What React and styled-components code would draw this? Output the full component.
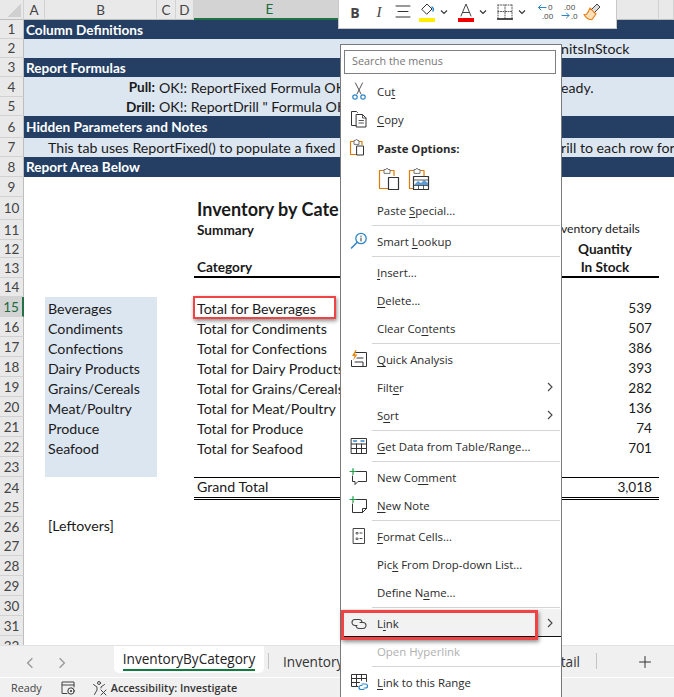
import React from 'react'
import styled, { createGlobalStyle } from 'styled-components'

const Global = createGlobalStyle`
  html, body { margin: 0; padding: 0; width: 674px; height: 697px; overflow: hidden; background: #fff; }
  * { box-sizing: border-box; }
`;

const COLS = '24px 21px 112px 19px 18px 367px 98px 15px';
const HEAD_COLS = '24px 21px 112px 19px 18px 152px 313px 15px';

const Page = styled.div`
  position: relative;
  width: 674px;
  height: 697px;
  overflow: hidden;
  display: flex;
  flex-direction: column;
  font-family: Lato, "Liberation Sans", sans-serif;
  font-size: 14.2px;
  color: #1a1a1a;
`;
const ColHeader = styled.div`
  display: grid;
  grid-template-columns: ${HEAD_COLS};
  height: 20px;
  background: #e9e9e9;
  flex: none;
`;
const ColCell = styled.div`
  display: flex;
  align-items: center;
  justify-content: center;
  font-size: 13.5px;
  color: ${p => (p.$active ? '#1d6b41' : '#444')};
  background: ${p => (p.$active ? '#d3d3d3' : 'transparent')};
  border-right: 1px solid #d2d2d2;
  border-bottom: ${p => (p.$active ? '2px solid #217346' : '1px solid #bdbdbd')};
`;
const Corner = styled.div`
  border-right: 1px solid #d2d2d2;
  border-bottom: 1px solid #bdbdbd;
  background: linear-gradient(135deg, #e9e9e9 50%, #d0d0d0 50%);
  background-size: 14px 14px;
  background-position: right 2px bottom 2px;
  background-repeat: no-repeat;
`;
const Sheet = styled.div`
  flex: 1;
  min-height: 0;
  overflow: hidden;
`;
const Row = styled.div`
  display: grid;
  grid-template-columns: ${COLS};
  height: ${p => p.$h}px;
`;
const RowNum = styled.div`
  display: flex;
  align-items: center;
  justify-content: center;
  font-size: 13.5px;
  padding-top: ${p => (p.$low ? 1 : 0)}px;
  color: ${p => (p.$active ? '#1d6b41' : '#444')};
  background: ${p => (p.$active ? '#d3d3d3' : '#e9e9e9')};
  border-bottom: 1px solid #d2d2d2;
  border-right: ${p => (p.$active ? '2px solid #217346' : '1px solid #bdbdbd')};
`;
const Banner = styled.div`
  grid-column: 2 / -1;
  display: flex;
  align-items: center;
  padding-left: 2px;
  background: #243f63;
  color: #fff;
  font-size: 13.6px;
  font-weight: 700;
  white-space: nowrap;
`;
const Band = styled.div`
  grid-column: 2 / 7;
  display: flex;
  align-items: center;
  background: #dce6f1;
  white-space: nowrap;
  overflow: hidden;
`;
const BandRight = styled.div`
  grid-column: 7 / -1;
  display: flex;
  align-items: center;
  background: #dce6f1;
  white-space: nowrap;
  overflow: hidden;
`;
const PullLabel = styled.b`
  width: 131px;
  text-align: right;
  flex: none;
  margin-right: 4px;
  font-size: 13.6px;
`;
const TabNote = styled.span`
  padding-left: 24px;
`;
const Blank = styled.div`
  grid-column: 2 / 3;
`;
const CategoryCell = styled.div`
  grid-column: 3 / 4;
  display: flex;
  align-items: center;
  padding: ${p => (p.$low ? '2px 0 0 3px' : p.$raised ? '0 0 3px 3px' : '0 0 0 3px')};
  white-space: nowrap;
  background: ${p => (p.$tint ? '#dce6f1' : 'transparent')};
`;
const LabelCell = styled.div`
  grid-column: 6 / 7;
  display: flex;
  align-items: center;
  padding: ${p => (p.$low ? '2px 0 0 3px' : p.$total ? '0 0 2px 3px' : '0 0 0 3px')};
  white-space: nowrap;
  font-weight: ${p => (p.$bold ? 700 : 400)};
  font-size: ${p => p.$size || (p.$bold ? 13.6 : 14.2)}px;
  border-top: ${p => (p.$total ? '1px solid #000' : '0')};
  border-bottom: ${p => (p.$total ? '3px double #000' : p.$rule ? '2px solid #000' : '0')};
`;
const ValueCell = styled.div`
  grid-column: 7 / 8;
  display: flex;
  align-items: center;
  justify-content: flex-end;
  padding: ${p => (p.$low ? '2px 7px 0 0' : p.$total ? '0 7px 2px 0' : '0 7px 0 0')};
  white-space: nowrap;
  font-size: 13.6px;
  border-top: ${p => (p.$total ? '1px solid #000' : '0')};
  border-bottom: ${p => (p.$total ? '3px double #000' : '0')};
`;
const HeadCell = styled.div`
  grid-column: 7 / 8;
  display: flex;
  align-items: center;
  justify-content: center;
  padding-right: 10px;
  white-space: nowrap;
  font-weight: 700;
  font-size: 13.6px;
  border-bottom: ${p => (p.$rule ? '2px solid #000' : '0')};
`;
const SmallNote = styled.div`
  grid-column: 7 / 8;
  display: flex;
  align-items: center;
  padding-bottom: 3px;
  white-space: nowrap;
  font-size: 12.2px;
`;
const Tabs = styled.div`
  flex: none;
  height: 32px;
  background: #f0f0f0;
  display: flex;
  align-items: stretch;
  padding-left: 14px;
  border-top: 1px solid #e2e2e2;
  font-family: "Open Sans", sans-serif;
  font-size: 13.6px;
  color: #333;
`;
const Arrow = styled.div`
  width: 32px;
  display: flex;
  align-items: center;
  justify-content: center;
  margin-top: 2px;
`;
const ActiveTab = styled.div`
  margin-left: 36px;
  width: 150px;
  flex: none;
  margin-bottom: 4px;
  background: #fff;
  border-radius: 0 0 5px 5px;
  display: flex;
  justify-content: center;
  align-items: center;
`;
const ActiveLabel = styled.span`
  line-height: 20px;
  border-bottom: 2px solid #107c41;
  color: #222;
  white-space: nowrap;
`;
const TabDivider = styled.div`
  width: 1px;
  flex: none;
  margin: 7px 0 8px 4px;
  background: #c4c4c4;
`;
const TabLabel = styled.div`
  margin-left: 14px;
  width: 260px;
  flex: none;
  display: flex;
  align-items: center;
  white-space: nowrap;
  overflow: hidden;
`;
const RightTabs = styled.div`
  display: flex;
  align-items: stretch;
  flex: 1;
  justify-content: flex-end;
  padding-right: 23px;
`;
const TabEnd = styled.span`
  display: flex;
  align-items: center;
  margin-right: 12px;
`;
const Plus = styled.span`
  display: flex;
  align-items: center;
  margin-left: 42px;
`;
const StatusBar = styled.div`
  flex: none;
  height: 20px;
  background: #f0f0f0;
  border-top: 1px solid #fff;
  display: flex;
  align-items: center;
  padding-left: 11px;
  font-family: "Open Sans", sans-serif;
  font-size: 10.8px;
  color: #444;
`;
const StatusIcon = styled.span`
  display: inline-flex;
  margin-left: ${p => p.$gap}px;
  margin-right: ${p => p.$after || 0}px;
`;
const StatusBold = styled.span`
  font-weight: 600;
  color: #333;
`;
const Callout = styled.div`
  position: absolute;
  left: ${p => p.$x}px;
  top: ${p => p.$y}px;
  width: ${p => p.$w}px;
  height: ${p => p.$h}px;
  border: ${p => p.$t || 2}px solid #f04444;
  box-shadow: 1px 2px 4px rgba(0, 0, 0, 0.45);
  pointer-events: none;
`;
const MiniBar = styled.div`
  position: absolute;
  left: 338px;
  top: 0;
  width: 279px;
  height: 29px;
  background: #fff;
  border: 1px solid #c8c8c8;
  border-top: 0;
  display: flex;
  align-items: center;
  padding: 0 0 4px 4px;
`;
const MiniBtn = styled.span`
  display: flex;
  align-items: center;
  justify-content: center;
  width: ${p => p.$w}px;
  margin-left: ${p => p.$ml || 0}px;
  flex: none;
`;
const BoldGlyph = styled.b`
  font-family: "Open Sans", sans-serif;
  font-size: 14px;
  color: #444;
`;
const ItalicGlyph = styled.i`
  font-family: "Liberation Serif", serif;
  font-size: 15px;
  color: #444;
`;
const Menu = styled.div`
  position: absolute;
  left: 340px;
  top: 44px;
  width: 222px;
  height: 670px;
  background: #fff;
  border: 1px solid #7a7a7a;
  padding: 5px 0 0 0;
  font-family: "Open Sans", sans-serif;
  font-size: 11.4px;
  color: #2a2a2a;
`;
const Search = styled.div`
  margin: 0 4px 3px 3px;
  height: 24px;
  width: 212px;
  border: 1px solid #7f7f7f;
  color: #777;
  padding: 0 0 4px 7px;
  display: flex;
  align-items: center;
  font-size: 10.8px;
`;
const Item = styled.div`
  height: 28px;
  display: flex;
  align-items: center;
  padding-right: 6px;
  margin-top: ${p => (p.$bold ? 1 : 0)}px;
  color: ${p => (p.$off ? '#b0b0b0' : 'inherit')};
  font-weight: ${p => (p.$bold ? 700 : 400)};
  background: ${p => (p.$hot ? '#f2f2f2' : 'transparent')};
  box-shadow: ${p => (p.$hot ? 'inset 0 -1px 0 #111' : 'none')};
  & u { text-underline-offset: 2px; }
`;
const IconSlot = styled.span`
  width: 36px;
  flex: none;
  display: flex;
  justify-content: center;
  align-items: center;
`;
const ItemText = styled.span`
  flex: 1;
  white-space: nowrap;
`;
const Sep = styled.div`
  height: 1px;
  margin: 1px 1px 1px 31px;
  background: #d4d4d4;
`;
const PasteRow = styled.div`
  height: 34px;
  display: flex;
  align-items: center;
  gap: 6px;
  padding-left: 37px;
`;

const Svg = ({ w = 20, h = 20, children }) => (
  <svg width={w} height={h} viewBox={`0 0 ${w} ${h}`} fill="none" strokeLinecap="round" strokeLinejoin="round">{children}</svg>
)
const Chevron = ({ dir = 'right', color = '#555', s = 10 }) => (
  <svg width={s} height={s} viewBox="0 0 10 10" fill="none">
    <path d={dir === 'right' ? 'M3 1l4 4-4 4' : dir === 'left' ? 'M7 1L3 5l4 4' : 'M2 3.5l3 3 3-3'} stroke={color} strokeWidth="1.1" />
  </svg>
)
const ScissorsIcon = () => (
  <Svg>
    <path d="M6.5 2l5.5 11M13.5 2L8 13" stroke="#555" />
    <circle cx="6" cy="16" r="2.2" stroke="#2e86c7" strokeWidth="1.2" />
    <circle cx="14" cy="16" r="2.2" stroke="#2e86c7" strokeWidth="1.2" />
  </Svg>
)
const CopyIcon = () => (
  <Svg>
    <path d="M7 16.5H2.5v-14h5l1 1" stroke="#333" />
    <path d="M7.5 5.5h6l3.5 3.5v9H7.5z" fill="#fff" stroke="#333" />
    <path d="M10 11.5h4.5M10 14h4.5M13.5 5.5V9H17" stroke="#555" />
  </Svg>
)
const ClipIcon = ({ children, big }) => (
  <Svg w={big ? 24 : 20} h={big ? 24 : 20}>
    <path d={big ? 'M6 3.5H1.5v18H11' : 'M5 3.5H1.5v13H8'} stroke="#e07b00" strokeWidth="1.2" />
    <path d={big ? 'M11 3.5h5v5' : 'M9 3.5h4v3'} stroke="#e07b00" strokeWidth="1.2" />
    <path d={big ? 'M6 6V2.5h2l1-1.5 1 1.5h2V6z' : 'M5 6V2.5h1.5l1-1.5 1 1.5H10V6z'} fill="#fff" stroke="#777" />
    {children}
  </Svg>
)
const PasteIcon = () => <ClipIcon><rect x="8" y="8" width="6.5" height="9" fill="#fff" stroke="#333" /></ClipIcon>
const PasteBig = () => <ClipIcon big><rect x="10.5" y="10.5" width="10" height="12" fill="#fff" stroke="#333" strokeWidth="1.2" /></ClipIcon>
const PastePic = () => (
  <ClipIcon big>
    <rect x="5.5" y="9.5" width="15" height="13" fill="#fff" stroke="#333" strokeWidth="1.2" />
    <path d="M6 18l4-4 3 2 3-3 4 3v2z" fill="#5a9bd5" />
    <path d="M5.5 18.5h15M5.5 13h15M10.5 18.5v4M15.5 18.5v4" stroke="#333" strokeWidth=".8" />
  </ClipIcon>
)
const LookupIcon = () => (
  <Svg>
    <circle cx="12" cy="7.5" r="5.2" stroke="#2e86c7" strokeWidth="1.3" />
    <path d="M8 11.5L2.5 17" stroke="#2e86c7" strokeWidth="1.6" />
    <path d="M12 5v.4M12 7v3" stroke="#333" />
  </Svg>
)
const QuickIcon = () => (
  <Svg>
    <path d="M6.5 3.5h11v14h-15v-6" stroke="#333" />
    <path d="M6 13h8v4M8 9h6" stroke="#333" />
    <path d="M6.5 1L3 7h2.5L4 11.5l4.5-6H6L7.5 1z" fill="#e8891a" />
  </Svg>
)
const TableIcon = () => (
  <Svg>
    <rect x="2.5" y="2.5" width="15" height="15" stroke="#333" />
    <path d="M2.5 8h15M2.5 12.5h15M7.5 8v9.5M12.5 8v9.5" stroke="#333" />
    <path d="M4.5 5h3M12 5h3" stroke="#2e86c7" strokeWidth="1.4" />
  </Svg>
)
const CommentIcon = () => (
  <Svg>
    <path d="M6.5 4.5h11v10H9l-3 3v-3H3.5V9" stroke="#333" />
    <path d="M4 1.5v6M1 4.5h6" stroke="#1f9d45" strokeWidth="1.2" />
  </Svg>
)
const NoteIcon = () => (
  <Svg>
    <path d="M7 4.5h10.5v9l-4 4h-10V9" stroke="#333" />
    <path d="M13.5 17.5v-4h4" stroke="#333" />
    <path d="M4 1.5v6M1 4.5h6" stroke="#1f9d45" strokeWidth="1.2" />
  </Svg>
)
const FormatIcon = () => (
  <Svg>
    <rect x="4.5" y="2.5" width="11" height="15" stroke="#444" />
    <path d="M7.5 6.5H9V8H7.5zM7.5 12H9v1.5H7.5z" stroke="#444" strokeWidth=".8" />
    <path d="M11 7h2M11 12.5h2" stroke="#444" />
  </Svg>
)
const LinkIcon = () => (
  <Svg>
    <path d="M8 12.5H6a3 3 0 010-6h4a3 3 0 013 3" stroke="#444" strokeWidth="1.1" />
    <path d="M11 9.5h3a3 3 0 010 6h-4a3 3 0 01-3-3" stroke="#444" strokeWidth="1.1" />
  </Svg>
)
const RangeIcon = () => (
  <Svg>
    <path d="M9 14.5H2.5v-12h15v7" stroke="#333" />
    <path d="M2.5 6.5h15M2.5 10.5h8M7.5 2.5v12M12.5 2.5v6" stroke="#333" />
    <path d="M13 12h3.5a2 2 0 010 4H15M15 17.5h-3a2 2 0 010-4h1" stroke="#2e86c7" strokeWidth="1.2" />
  </Svg>
)
const FillIcon = () => (
  <Svg w={18} h={20}>
    <path d="M4 7l5-5 5 5-5 5z" stroke="#333" />
    <path d="M14 5c1.5 1 1.5 3 1 4" stroke="#2e86c7" strokeWidth="1.4" />
    <rect x="1" y="16" width="16" height="4" fill="#ffee00" />
  </Svg>
)
const FontColorIcon = () => (
  <Svg w={16} h={20}>
    <path d="M3 14L8 2l5 12M4.5 10.5h7" stroke="#444" />
    <rect x="0" y="16" width="16" height="4" fill="#f00000" />
  </Svg>
)
const AlignIcon = () => (
  <Svg w={16} h={16}>
    <path d="M1 2h14M3 7.5h10M1 13h14" stroke="#333" />
  </Svg>
)
const BorderIcon = () => (
  <Svg w={16} h={16}>
    <path d="M1 1h14M1 7.5h14M1 1v13M15 1v13M8 1v13" stroke="#555" strokeDasharray="1 1.5" />
    <path d="M.5 15h15" stroke="#111" strokeWidth="1.4" />
  </Svg>
)
const DecimalIcon = ({ more }) => (
  <Svg w={18} h={24}>
    <g transform="translate(0 3)">
      {more ? (
        <>
          <text x="3" y="6.5" fontSize="8" fill="#444" fontFamily="Open Sans">.00</text>
          <text x="10" y="16" fontSize="8" fill="#444" fontFamily="Open Sans">.0</text>
          <path d="M1 12.5h7M5.5 10L8 12.5 5.500 15" stroke="#2e86c7" />
        </>
      ) : (
        <>
          <text x="11" y="6.5" fontSize="8" fill="#444" fontFamily="Open Sans">0</text>
          <text x="5" y="16" fontSize="8" fill="#444" fontFamily="Open Sans">.00</text>
          <path d="M9 4.5H1.5M4 2L1.5 4.5 4 7" stroke="#2e86c7" />
        </>
      )}
    </g>
  </Svg>
)
const BrushIcon = () => (
  <Svg w={18} h={18}>
    <path d="M7 5l6 6-4 5.5c-3 .5-6-1.5-8-5 2 .5 3.5 0 6-6.500z" fill="#fbe0b8" stroke="#e8821c" strokeWidth="1.2" />
    <path d="M9 6l5-5 3 3-5 5" fill="#ddd" stroke="#444" />
  </Svg>
)
const ReadyIcon = () => (
  <Svg w={16} h={16}>
    <path d="M7 13.5H2V2h12v5M2 5h12" stroke="#444" />
    <circle cx="11" cy="11" r="3.2" stroke="#333" />
    <circle cx="11" cy="11" r="1" fill="#333" />
  </Svg>
)
const AccessIcon = () => (
  <Svg w={16} h={16}>
    <circle cx="7" cy="3" r="1.5" stroke="#444" />
    <path d="M1.5 4.5L5 7v3l-2.500 4.500M12.500 4.500L9 7v1" stroke="#444" />
    <path d="M9 10l5 5M14 10l-5 5" stroke="#444" />
  </Svg>
)
const PlusIcon = () => (
  <Svg w={12} h={12}>
    <path d="M6 .5v11M.5 6h11" stroke="#333" />
  </Svg>
)

const colLetters = [['A', false], ['B', false], ['C', false], ['D', false], ['E', true], ['', false], ['', false]]

const categories = [
  [15, 'Beverages', 'Total for Beverages', '539'],
  [16, 'Condiments', 'Total for Condiments', '507'],
  [17, 'Confections', 'Total for Confections', '386'],
  [18, 'Dairy Products', 'Total for Dairy Products', '393'],
  [19, 'Grains/Cereals', 'Total for Grains/Cereals', '282'],
  [20, 'Meat/Poultry', 'Total for Meat/Poultry', '136'],
  [21, 'Produce', 'Total for Produce', '74'],
  [22, 'Seafood', 'Total for Seafood', '701'],
]

const Spreadsheet = () => (
  <Sheet>
    <Row $h={19}><RowNum>1</RowNum><Banner>Column Definitions</Banner></Row>
    <Row $h={19}><RowNum>2</RowNum><Band /><BandRight>nitsInStock</BandRight></Row>
    <Row $h={19}><RowNum>3</RowNum><Banner>Report Formulas</Banner></Row>
    <Row $h={20}><RowNum>4</RowNum><Band><PullLabel>Pull:</PullLabel>OK!: ReportFixed Formula OK</Band><BandRight>eady.</BandRight></Row>
    <Row $h={19}><RowNum>5</RowNum><Band><PullLabel>Drill:</PullLabel>OK!: ReportDrill " Formula OK</Band><BandRight /></Row>
    <Row $h={22}><RowNum>6</RowNum><Banner>Hidden Parameters and Notes</Banner></Row>
    <Row $h={19}><RowNum>7</RowNum><Band><TabNote>This tab uses ReportFixed() to populate a fixed</TabNote></Band><BandRight>rill to each row for</BandRight></Row>
    <Row $h={20}><RowNum>8</RowNum><Banner>Report Area Below</Banner></Row>
    <Row $h={20}><RowNum>9</RowNum></Row>
    <Row $h={23}><RowNum>10</RowNum><LabelCell $bold $size={18}>Inventory by Cate</LabelCell></Row>
    <Row $h={20}><RowNum>11</RowNum><LabelCell $bold>Summary</LabelCell><SmallNote>ventory details</SmallNote></Row>
    <Row $h={18}><RowNum>12</RowNum><HeadCell>Quantity</HeadCell></Row>
    <Row $h={20}><RowNum>13</RowNum><LabelCell $bold $rule>Category</LabelCell><HeadCell $rule>In Stock</HeadCell></Row>
    <Row $h={19}><RowNum>14</RowNum></Row>
    {categories.map(([n, cat, total, qty]) => (
      <Row $h={20} key={n}>
        <RowNum $low $active={n === 15}>{n}</RowNum>
        <CategoryCell $tint $low>{cat}</CategoryCell>
        <LabelCell $low>{total}</LabelCell>
        <ValueCell $low>{qty}</ValueCell>
      </Row>
    ))}
    <Row $h={20}><RowNum>23</RowNum><CategoryCell $tint /></Row>
    <Row $h={20}><RowNum>24</RowNum><LabelCell $total>Grand Total</LabelCell><ValueCell $total>3,018</ValueCell></Row>
    <Row $h={20}><RowNum>25</RowNum></Row>
    <Row $h={19}><RowNum>26</RowNum><CategoryCell $raised>[Leftovers]</CategoryCell></Row>
    {[27, 28, 29, 30, 31, 32].map(n => <Row $h={20} key={n}><RowNum>{n}</RowNum><Blank /></Row>)}
  </Sheet>
)

const menuItems = [
  { icon: <ScissorsIcon />, label: <>Cu<u>t</u></> },
  { icon: <CopyIcon />, label: <><u>C</u>opy</> },
  { icon: <PasteIcon />, label: 'Paste Options:', bold: true },
  { paste: true },
  { label: <>Paste <u>S</u>pecial...</> },
  { sep: true },
  { icon: <LookupIcon />, label: <>Smart <u>L</u>ookup</> },
  { sep: true },
  { label: <><u>I</u>nsert...</> },
  { label: <><u>D</u>elete...</> },
  { label: <>Clear Co<u>n</u>tents</> },
  { sep: true },
  { icon: <QuickIcon />, label: <><u>Q</u>uick Analysis</> },
  { label: <>Filt<u>e</u>r</>, more: true },
  { label: <>S<u>o</u>rt</>, more: true },
  { sep: true },
  { icon: <TableIcon />, label: <><u>G</u>et Data from Table/Range...</> },
  { sep: true },
  { icon: <CommentIcon />, label: <>New Co<u>m</u>ment</> },
  { icon: <NoteIcon />, label: <><u>N</u>ew Note</> },
  { sep: true },
  { icon: <FormatIcon />, label: <><u>F</u>ormat Cells...</> },
  { label: <>Pic<u>k</u> From Drop-down List...</> },
  { label: <>Define N<u>a</u>me...</> },
  { sep: true },
  { icon: <LinkIcon />, label: <>L<u>i</u>nk</>, more: true, hot: true },
  { label: <>Open Hyperlink</>, off: true },
  { sep: true },
  { icon: <RangeIcon />, label: <><u>L</u>ink to this Range</> },
]

const ContextMenu = () => (
  <Menu>
    <Search>Search the menus</Search>
    {menuItems.map((m, i) => {
      if (m.sep) return <Sep key={i} />
      if (m.paste) return <PasteRow key={i}><PasteBig /><PastePic /></PasteRow>
      return (
        <Item key={i} $bold={m.bold} $hot={m.hot} $off={m.off}>
          <IconSlot>{m.icon}</IconSlot>
          <ItemText>{m.label}</ItemText>
          {m.more && <Chevron color="#444" />}
        </Item>
      )
    })}
  </Menu>
)

export default function App() {
  return (
    <>
      <Global />
      <Page>
        <ColHeader>
          <Corner />
          {colLetters.map(([c, active], i) => <ColCell key={i} $active={active}>{c}</ColCell>)}
        </ColHeader>
        <Spreadsheet />
        <Tabs>
          <Arrow><Chevron dir="left" color="#999" s={12} /></Arrow>
          <Arrow><Chevron color="#999" s={12} /></Arrow>
          <ActiveTab><ActiveLabel>InventoryByCategory</ActiveLabel></ActiveTab>
          <TabDivider />
          <TabLabel>Inventory</TabLabel>
          <RightTabs><TabEnd>etail</TabEnd><TabDivider /><Plus><PlusIcon /></Plus></RightTabs>
        </Tabs>
        <StatusBar>
          Ready
          <StatusIcon $gap={18}><ReadyIcon /></StatusIcon>
          <StatusIcon $gap={16} $after={3}><AccessIcon /></StatusIcon>
          <StatusBold>Accessibility: Investigate</StatusBold>
        </StatusBar>
        <Callout $x={193} $y={296} $w={143} $h={23} />
        <MiniBar>
          <MiniBtn $w={24}><BoldGlyph>B</BoldGlyph></MiniBtn>
          <MiniBtn $w={24}><ItalicGlyph>I</ItalicGlyph></MiniBtn>
          <MiniBtn $w={24}><AlignIcon /></MiniBtn>
          <MiniBtn $w={24}><FillIcon /></MiniBtn>
          <MiniBtn $w={10}><Chevron dir="down" color="#333" /></MiniBtn>
          <MiniBtn $w={24} $ml={5}><FontColorIcon /></MiniBtn>
          <MiniBtn $w={10}><Chevron dir="down" color="#333" /></MiniBtn>
          <MiniBtn $w={24} $ml={5}><BorderIcon /></MiniBtn>
          <MiniBtn $w={10}><Chevron dir="down" color="#333" /></MiniBtn>
          <MiniBtn $w={24} $ml={7}><DecimalIcon /></MiniBtn>
          <MiniBtn $w={24}><DecimalIcon more /></MiniBtn>
          <MiniBtn $w={20}><BrushIcon /></MiniBtn>
        </MiniBar>
        <ContextMenu />
        <Callout $x={341} $y={610} $w={197} $h={30} $t={3} />
      </Page>
    </>
  )
}
